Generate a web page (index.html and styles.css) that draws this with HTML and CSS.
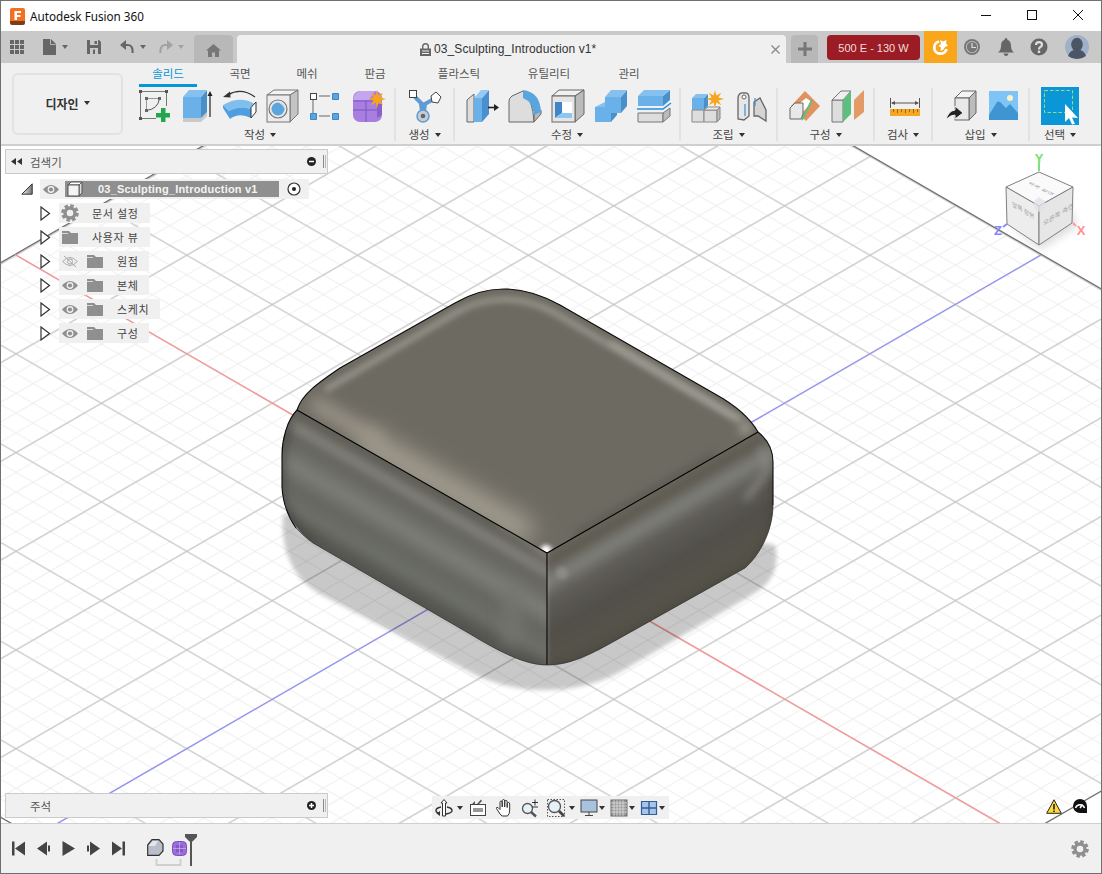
FILE: index.html
```html
<!DOCTYPE html>
<html lang="ko">
<head>
<meta charset="utf-8">
<title>Autodesk Fusion 360</title>
<link rel="stylesheet" href="styles.css">
</head>
<body>
<svg class="defs" width="0" height="0" aria-hidden="true">
  <defs>
    <symbol id="star" viewBox="-9 -9 18 18"><polygon fill="#f7a51b" points="0,-9 1.4,-3.4 6.2,-6.2 3.4,-1.4 9,0 3.4,1.4 6.2,6.2 1.4,3.4 0,9 -1.4,3.4 -6.2,6.2 -3.4,1.4 -9,0 -3.4,-1.4 -6.2,-6.2 -1.4,-3.4"/></symbol>
    <symbol id="eye" viewBox="0 0 16 12"><path fill="#8f8f8f" d="M0 6Q8-3 16 6 8 15 0 6Z"/><circle cx="8" cy="6" r="3.4" fill="#f0f0f0"/><circle cx="8" cy="6" r="2.1" fill="#8f8f8f"/></symbol>
    <symbol id="eye-off" viewBox="0 0 16 12"><path fill="none" stroke="#aaa" d="M.7 6Q8-2 15.3 6 8 14 .7 6Z"/><circle cx="8" cy="6" r="2.6" fill="none" stroke="#aaa"/><path stroke="#aaa" d="M2 .5 14 11.5"/></symbol>
    <symbol id="folder" viewBox="0 0 16 13"><path fill="#8f8f8f" d="M0 0H7L9 2H16V13H0Z"/><path stroke="#d8d8d8" d="M0 2.5H6"/></symbol>
    <symbol id="gear" viewBox="0 0 18 18"><circle cx="9" cy="9" r="7" fill="none" stroke="#8f8f8f" stroke-width="3.6" stroke-dasharray="3.3 2.2"/><circle cx="9" cy="9" r="5" fill="none" stroke="#8f8f8f" stroke-width="3.4"/></symbol>
    <symbol id="tri" viewBox="0 0 11 15"><path fill="#fff" stroke="#333" stroke-width="1.2" d="M1 1 9.5 7.5 1 14Z"/></symbol>
    <linearGradient id="rootTri" x1="0" x2="1" y1="0" y2="0"><stop offset="0" stop-color="#eee"/><stop offset="1" stop-color="#777"/></linearGradient>
  </defs>
</svg>

<div class="window">
  <header class="titlebar">
    <svg class="logo" viewBox="0 0 15 17"><path fill="#f37021" d="M2 0H13Q15 0 15 2V13H0V2Q0 0 2 0Z"/><path fill="#7c3d1b" d="M0 13H15V15Q15 17 13 17H2Q0 17 0 15Z"/><path fill="#fff" d="M4.5 3H11V5H7V7H10.5V9H7V12H4.5Z"/></svg>
    <span class="app-name">Autodesk Fusion 360</span>
    <div class="win-controls">
      <svg viewBox="0 0 12 12"><path stroke="#111" d="M1 6.5H11"/></svg>
      <svg viewBox="0 0 12 12"><rect x="1.5" y="1.5" width="9" height="9" fill="none" stroke="#111"/></svg>
      <svg viewBox="0 0 12 12"><path stroke="#111" d="M1 1 11 11M11 1 1 11"/></svg>
    </div>
  </header>

  <div class="tabbar">
    <div class="quick">
      <svg class="q-grid" viewBox="0 0 14 14"><path fill="#666" d="M0 0H4V4H0ZM5 0H9V4H5ZM10 0H14V4H10ZM0 5H4V9H0ZM5 5H9V9H5ZM10 5H14V9H10ZM0 10H4V14H0ZM5 10H9V14H5ZM10 10H14V14H10Z"/></svg>
      <svg class="q-file" viewBox="0 0 13 16"><path fill="#666" d="M0 0H8L13 5V16H0Z"/><path fill="#ccc" d="M8 0V5H13L12.2 5.8H7.2V0Z"/></svg>
      <i class="caret q-c1"></i>
      <svg class="q-save" viewBox="0 0 14 14"><path fill="#666" d="M0 0H12L14 2V14H0Z"/><path fill="#c9c9c9" d="M3 0H11V5H3ZM3 8H11V14H3Z"/><path fill="#666" d="M7.5 1H10V4H7.5ZM6 9.5H8V14H6Z"/></svg>
      <svg class="q-undo" viewBox="0 0 14 14"><path fill="none" stroke="#666" stroke-width="2.2" d="M3 5H8Q13 5 12.6 13"/><path fill="#666" d="M6 0V10L0 5Z"/></svg>
      <i class="caret q-c2"></i>
      <svg class="q-redo" viewBox="0 0 14 14"><path fill="none" stroke="#a2a2a2" stroke-width="2.2" d="M11 5H6Q1 5 1.400 13"/><path fill="#a2a2a2" d="M8 0V10L14 5Z"/></svg>
      <i class="caret caret-light q-c3"></i>
    </div>
    <div class="home-tab"><svg viewBox="0 0 15 13"><path fill="#777" d="M7.500 0 15 6.500H13V13H9V8.500H6V13H2V6.500H0Z"/></svg></div>
    <div class="doc-tab">
      <svg class="lock" viewBox="0 0 11 13"><path fill="none" stroke="#666" stroke-width="1.400" d="M2.700 6V3.600Q2.700 .8 5.500 .8 8.300 .8 8.300 3.600V6"/><path fill="#666" d="M0 5.500H11V13H0Z"/><path stroke="#f0f0f0" d="M2 8H9M2 10.500H9"/></svg>
      <span class="doc-name">03_Sculpting_Introduction v1*</span>
      <svg class="doc-close" viewBox="0 0 9 9"><path stroke="#888" stroke-width="1.300" d="M.5.5 8.500 8.500M8.500.5 .5 8.500"/></svg>
    </div>
    <div class="plus-tab"><svg viewBox="0 0 14 14"><path fill="#777" d="M5.500 0H8.500V5.500H14V8.500H8.500V14H5.500V8.500H0V5.500H5.500Z"/></svg></div>
    <div class="license">500 E - 130 W</div>
    <div class="job"><svg viewBox="0 0 18 18"><path fill="none" stroke="#fff" stroke-width="2.800" d="M7 3.500A6.200 6.200 0 1 0 14.500 11"/><path fill="#fff" d="M8 2 11 3.500 14.500 2 14 5.500 16 7.500 13 9 11 12 8.500 13 9 9.500 6.500 8 9 6Z"/></svg></div>
    <svg class="top-ico clock" viewBox="0 0 18 18"><circle cx="9" cy="9" r="8" fill="#777"/><circle cx="9" cy="9" r="6" fill="#c9c9c9"/><circle cx="9" cy="9" r="5.200" fill="#777"/><path fill="none" stroke="#ddd" stroke-width="1.200" d="M9 5V9.500H13"/></svg>
    <svg class="top-ico bell" viewBox="0 0 16 18"><path fill="#666" d="M8 0Q9.500 0 9.500 2 13 3 13 8 13 12 16 14.500H0Q3 12 3 8 3 3 6.500 2 6.500 0 8 0Z"/><path fill="#666" d="M5.500 15.500H10.500Q10 18 8 18 6 18 5.500 15.500Z"/></svg>
    <svg class="top-ico help" viewBox="0 0 18 18"><circle cx="9" cy="9" r="8.500" fill="#666"/><path fill="none" stroke="#ddd" stroke-width="2.200" d="M6 7Q6 4.200 9 4.200 12 4.200 12 6.800 12 8.500 10 9.300 9 9.800 9 11.500"/><rect x="7.800" y="12.600" width="2.400" height="2.400" fill="#ddd"/></svg>
    <svg class="avatar" viewBox="0 0 24 24"><circle cx="12" cy="12" r="12" fill="#9fb0c8"/><ellipse cx="12" cy="9.500" rx="5.800" ry="6.800" fill="#4b5566"/><path fill="#4b5566" d="M3 21Q5 15.500 9.500 15H14.500Q19 15.500 21 21 17 24 12 24 7 24 3 21Z"/></svg>
  </div>

  <section class="ribbon">
    <button class="design-btn">디자인<i class="caret caret-dark"></i></button>
    <div class="tools">
      <nav class="tabs">
        <span class="tab active">솔리드</span><span class="tab">곡면</span><span class="tab">메쉬</span><span class="tab">판금</span><span class="tab">플라스틱</span><span class="tab">유틸리티</span><span class="tab">관리</span>
      </nav>
      <div class="groups">
        <div class="group g1">
          <div class="icons">
            <svg viewBox="0 0 36 36"><path fill="none" stroke="#777" d="M4.500 3.500H30.500M4.500 3.500V30.500M4.500 30.500H20M30.500 3.500V18"/><path fill="#555" d="M3 2H6V5H3ZM29 2H32V5H29ZM3 29H6V32H3Z"/><path fill="none" stroke="#999" d="M10.500 10.500H23.500M10.500 10.500V22.500"/><path fill="none" stroke="#555" d="M10.500 22.500Q22 21 23.500 10.500"/><path fill="#666" d="M9 21H12V24H9ZM22 9H25V12H22ZM9 9H12V12H9Z"/><path fill="#22a84a" d="M25 20H29.500V25H34V29.500H29.500V34H25V29.500H20V25H25Z"/></svg>
            <svg viewBox="0 0 36 36"><polygon fill="#c9c9c9" points="4,30 22,30 28,24 28,28 22,34 4,34"/><polygon fill="#69b1e8" points="4,9 22,9 22,30 4,30"/><polygon fill="#4a90c8" points="22,9 28,2 28,24 22,30"/><polygon fill="#85c0ee" points="4,9 10,2 28,2 22,9"/><path stroke="#222" stroke-width="1.200" d="M31 6V29"/><path fill="#222" d="M28.500 8 31 3 33.500 8Z"/></svg>
            <svg viewBox="0 0 36 36"><path fill="none" stroke="#333" stroke-width="1.200" d="M6 7Q19-1 33 9"/><path fill="#333" d="M1 9 8 3.500 8.500 9.500Z"/><path fill="#7fbfee" d="M1 17Q18 7 33 16L29 21Q17 17 7 23Z"/><path fill="#4f9ee0" d="M1 17 7 23Q17 17 29 21V30Q17 24 8 31L1 20Z"/><polygon fill="#fff" stroke="#333" points="29,19.500 34,14 34,24 29,30"/></svg>
            <svg viewBox="0 0 36 36"><polygon fill="#f3f3f3" stroke="#777" points="2,7 9,2 33,2 25,7"/><polygon fill="#c4c4c4" stroke="#777" points="25,7 33,2 33,26 25,34"/><rect x="2" y="7" width="23" height="27" fill="#ececec" stroke="#777"/><circle cx="13" cy="21" r="9" fill="#e8e8e8" stroke="#777" stroke-width="1.200"/><circle cx="13" cy="21" r="6.500" fill="#5aa5de"/><path fill="#e8f3fb" d="M13 14.500A6.500 6.500 0 0 1 19.500 21Q18 16 13 14.500Z"/></svg>
            <svg viewBox="0 0 36 36"><path stroke="#666" d="M11 8H22M5 11V25M11 28H22"/><rect x="2.500" y="5.500" width="6" height="6" fill="#fff" stroke="#444"/><path fill="#5aa5de" stroke="#3f86c8" d="M24.500 5.500H30.500V11.500H24.500ZM2.500 25.500H8.500V31.500H2.500ZM24.500 25.500H30.500V31.500H24.500Z"/></svg>
            <svg viewBox="0 0 36 36"><rect x="2" y="3" width="29" height="31" rx="7" fill="#a87fe0"/><path fill="#c4a6ee" d="M2 12Q3 5 9 3H24L18 12Z"/><path fill="none" stroke="#7c54bc" d="M2 22H31M15 13V34M2 13H22"/><path fill="#8a60c8" d="M26 16H31V27L26 30Z"/><use href="#star" x="17" y="2" width="18" height="18"/></svg>
          </div>
          <div class="group-label lbl1">작성<i class="caret caret-dark"></i></div>
        </div>
        <div class="group g2">
          <div class="icons">
            <svg viewBox="0 0 36 36"><path fill="none" stroke="#5f9bd5" stroke-width="4" d="M9 9 17 17M28 11 17 17M17 17V25"/><path fill="#5f9bd5" d="M13 16H21L20 24H14Z"/><circle cx="17" cy="28" r="6" fill="#c6ccd3" stroke="#5f9bd5" stroke-width="1.500"/><circle cx="17" cy="28" r="2.300" fill="#666"/><rect x="3.500" y="2.500" width="7" height="7" fill="#fff" stroke="#444"/><polygon fill="#fff" stroke="#444" points="30,4 35,9 32,15 26,14 25,8"/></svg>
          </div>
          <div class="group-label">생성<i class="caret caret-dark"></i></div>
        </div>
        <div class="group g3">
          <div class="icons">
            <svg viewBox="0 0 36 36"><polygon fill="#ddd" stroke="#666" points="3,12 10,6 10,34 3,34"/><polygon fill="#69b1e8" points="10,10 18,10 18,34 10,34"/><polygon fill="#4a8fd0" points="18,10 25,2 25,26 18,34"/><polygon fill="#95c9f3" points="10,10 17,2 25,2 18,10"/><path stroke="#222" stroke-width="1.600" d="M24 19.500H31"/><path fill="#222" d="M30 16 35 19.500 30 23Z"/></svg>
            <svg viewBox="0 0 36 36"><path fill="#ddd" stroke="#666" d="M2 34V13Q2 10 5 8L16 3Q26 12 27 34Z"/><polygon fill="#b8b8b8" stroke="#666" points="27,34 34,26 34,22 27,26"/><path fill="#5aa5de" d="M16 2Q33 4 34 24L27 27Q26 14 16 10Z"/></svg>
            <svg viewBox="0 0 36 36"><polygon fill="#f0f0f0" stroke="#666" points="2,8 9,2 34,2 25,8"/><polygon fill="#bbb" stroke="#666" points="25,8 34,2 34,26 25,34"/><rect x="2" y="8" width="23" height="26" fill="#e5e5e5" stroke="#666"/><rect x="5" y="14" width="17" height="16" fill="#fff"/><polygon fill="#3f86c8" points="5,14 12,14 12,25 5,30"/><polygon fill="#8cc6f2" points="5,30 12,25 22,25 22,30"/></svg>
            <svg viewBox="0 0 36 36"><polygon fill="#69b1e8" points="12,9 28,9 28,25 12,25"/><polygon fill="#4a90c8" points="28,9 34,2 34,18 28,25"/><polygon fill="#85c0ee" points="12,9 18,2 34,2 28,9"/><polygon fill="#69b1e8" points="2,19 18,19 18,34 2,34"/><polygon fill="#4a90c8" points="18,25 24,25 24,27 18,34"/><polygon fill="#85c0ee" points="2,19 12,14 12,19"/></svg>
            <svg viewBox="0 0 36 36"><polygon fill="#69b1e8" points="2,8 27,8 27,18 2,18"/><polygon fill="#4a90c8" points="27,8 34,2 34,12 27,18"/><polygon fill="#85c0ee" points="2,8 8,2 34,2 27,8"/><path fill="none" stroke="#1e90e0" stroke-width="1.500" d="M1 21H27L35 15"/><polygon fill="#ddd" stroke="#777" points="2,25 27,25 27,34 2,34"/><polygon fill="#bbb" stroke="#777" points="27,25 34,20 34,28 27,34"/></svg>
          </div>
          <div class="group-label">수정<i class="caret caret-dark"></i></div>
        </div>
        <div class="group g4">
          <div class="icons">
            <svg viewBox="0 0 36 36"><polygon fill="#69b1e8" points="3,10 15,10 15,22 3,22"/><polygon fill="#4a90c8" points="15,10 19,6 19,18 15,22"/><polygon fill="#85c0ee" points="3,10 7,6 19,6 15,10"/><polygon fill="#ddd" stroke="#888" points="3,22 15,22 15,34 3,34"/><polygon fill="#ddd" stroke="#888" points="15,22 28,22 28,34 15,34"/><polygon fill="#bbb" stroke="#888" points="28,22 31,19 31,31 28,34"/><polygon fill="#eee" stroke="#888" points="15,22 19,19 31,19 28,22"/><use href="#star" x="17" y="2" width="18" height="18"/></svg>
            <svg viewBox="0 0 36 36"><path fill="#e6e6e6" stroke="#666" stroke-width="1.300" d="M2 31V11Q2 4 8 5 13 4 13 10V28L8 32Z"/><path fill="#d4d4d4" stroke="#666" stroke-width="1.300" d="M18 14 24 10 30 22V33L22 28 18 28Z"/><path stroke="#3b8ed8" stroke-width="1.200" d="M9 16V28M19 10V18"/><circle cx="8" cy="9" r="2" fill="#fff" stroke="#666"/></svg>
          </div>
          <div class="group-label">조립<i class="caret caret-dark"></i></div>
        </div>
        <div class="group g5">
          <div class="icons">
            <svg viewBox="0 0 36 36"><polygon fill="#e0935f" points="17,3 32,18 18,33 3,18"/><polygon fill="#fff" points="12,15 18,10 24,14 13,26"/><polygon fill="#e8e8e8" stroke="#666" points="2,20 7,15 15,15 15,26 13,31 2,31"/><path stroke="#5dbf7f" stroke-width="2" d="M24 12 14 32"/></svg>
            <svg viewBox="0 0 36 36"><polygon fill="#ddd" stroke="#777" points="2,12 13,12 13,34 2,34"/><polygon fill="#efefef" stroke="#777" points="2,12 11,3 21,3 13,12"/><polygon fill="#5dbf7f" points="13,12 21,3 21,26 13,34"/><polygon fill="#e29a66" points="24,12 34,2 34,24 24,32"/></svg>
          </div>
          <div class="group-label">구성<i class="caret caret-dark"></i></div>
        </div>
        <div class="group g6">
          <div class="icons">
            <svg viewBox="0 0 36 36"><path stroke="#555" d="M4.500 10V20M33.500 10V20M6 15H32"/><path fill="#555" d="M5 15 9 13V17ZM33 15 29 13V17Z"/><rect x="4" y="21" width="30" height="7" fill="#f6a623"/><path stroke="#9b6a14" d="M7.500 21V24M11.500 21V25M15.500 21V24M19.500 21V25M23.500 21V24M27.500 21V25M31.500 21V24"/></svg>
          </div>
          <div class="group-label">검사<i class="caret caret-dark"></i></div>
        </div>
        <div class="group g7">
          <div class="icons">
            <svg viewBox="0 0 36 36"><polygon fill="#f4f4f4" stroke="#666" points="10,10 17,3 31,3 24,10"/><polygon fill="#bcbcbc" stroke="#666" points="24,10 31,3 31,25 24,32"/><rect x="10" y="10" width="14" height="22" fill="#e8e8e8" stroke="#666"/><path fill="#222" stroke="#f0f0f0" d="M1 32Q3 23 10 22V18L18 25 10 31V27Q5 27 1 32Z"/></svg>
            <svg viewBox="0 0 36 36"><rect x="4" y="3" width="29" height="29" fill="#7fc4f6"/><path fill="#3f95d2" d="M4 27 12 14Q15 12 18 17L21 20 25 16 33 25V32H4Z"/><circle cx="25" cy="10" r="3" fill="#fbf3c4"/></svg>
          </div>
          <div class="group-label">삽입<i class="caret caret-dark"></i></div>
        </div>
        <div class="group g8">
          <div class="icons">
            <svg class="select-ico" viewBox="0 0 38 38"><rect width="38" height="38" fill="#0b96d8"/><rect x="3.500" y="3.500" width="28" height="22" fill="none" stroke="#8fe07f" stroke-dasharray="3.500 2"/><path fill="#fff" d="M24 17 37 31 31 30.500 34 37 31 37.500 28 31 24 35Z"/></svg>
          </div>
          <div class="group-label">선택<i class="caret caret-dark"></i></div>
        </div>
      </div>
    </div>
  </section>

  <main class="canvas">
    <svg class="scene" viewBox="1 146 1100 677" preserveAspectRatio="none">
      <defs>
        <pattern id="grid" width="100" height="100" patternUnits="userSpaceOnUse" patternTransform="matrix(.854 -.4935 .854 .4935 528.4 551.3)">
          <path fill="none" stroke="#eeeeee" stroke-width="1.100" d="M20 0V100M40 0V100M60 0V100M80 0V100M0 20H100M0 40H100M0 60H100M0 80H100"/>
          <path fill="none" stroke="#c6c6c6" stroke-width="1.400" d="M0 0V100M100 0V100M0 0H100M0 100H100"/>
        </pattern>
        <filter id="b2" filterUnits="userSpaceOnUse" x="0" y="100" width="1102" height="774"><feGaussianBlur stdDeviation="2"/></filter>
        <filter id="b3" filterUnits="userSpaceOnUse" x="0" y="100" width="1102" height="774"><feGaussianBlur stdDeviation="3"/></filter>
        <filter id="b4" filterUnits="userSpaceOnUse" x="0" y="100" width="1102" height="774"><feGaussianBlur stdDeviation="4"/></filter>
        <filter id="b8" filterUnits="userSpaceOnUse" x="0" y="100" width="1102" height="774"><feGaussianBlur stdDeviation="8"/></filter>
        <filter id="b12" filterUnits="userSpaceOnUse" x="0" y="100" width="1102" height="774"><feGaussianBlur stdDeviation="12"/></filter>
        <clipPath id="cT"><path d="M297 410C302 394 318 383 340 368L455 303C485 285 520 283 560 305L715 394C735 405 750 418 758 432L547 553Z"/></clipPath>
        <clipPath id="cL"><path d="M297 410C287 420 282 440 282 455V487C283 510 295 530 313 543L470 634C500 652 525 665 547 665V553Z"/></clipPath>
        <clipPath id="cR"><path d="M758 432C768 440 773 450 773 462V505C773 530 760 555 745 568L620 638C590 655 570 665 547 665V553Z"/></clipPath>
        <linearGradient id="gL" gradientUnits="userSpaceOnUse" x1="422" y1="482" x2="372" y2="569">
          <stop offset="0" stop-color="#5e5d55"/><stop offset=".07" stop-color="#66645e"/><stop offset=".15" stop-color="#83827a"/><stop offset=".25" stop-color="#656460"/><stop offset=".36" stop-color="#6d6d67"/><stop offset=".5" stop-color="#7d7d77"/><stop offset=".68" stop-color="#666661"/><stop offset=".86" stop-color="#6d6e69"/><stop offset="1" stop-color="#585853"/>
        </linearGradient>
        <linearGradient id="gR" gradientUnits="userSpaceOnUse" x1="650" y1="493" x2="700" y2="580">
          <stop offset="0" stop-color="#6a665c"/><stop offset=".1" stop-color="#5c5950"/><stop offset=".26" stop-color="#7f807a"/><stop offset=".42" stop-color="#5f5d57"/><stop offset=".7" stop-color="#514f49"/><stop offset="1" stop-color="#555349"/>
        </linearGradient>
      </defs>

      <polygon fill="#fff" points="0,0 1102,0 1102,874 0,874"/>
      <polygon fill="url(#grid)" points="528,-42 -479,540 528,1122 1536,540"/>
      <polygon fill="none" stroke="#707070" stroke-width="1.300" points="528,-42 -479,540 528,1122 1536,540"/>
      <path fill="none" stroke="#8f8fff" stroke-width="1.200" d="M1040.800 255 34 837"/>
      <path fill="none" stroke="#ff8f8f" stroke-width="1.200" d="M15 254.500 1022 836"/>

      <path fill="#000" opacity=".21" filter="url(#b2)" d="M283 515C281 550 292 578 320 594L470 672C515 696 575 696 620 672L750 596C772 584 780 568 775 545L640 520 400 500Z"/>

      <g clip-path="url(#cT)">
        <rect x="280" y="280" width="490" height="280" fill="#6d6a62"/>
        <path fill="none" stroke="#b0aa9b" stroke-width="22" filter="url(#b12)" d="M360 438 530 535"/>
        <path fill="none" stroke="#a09a8c" stroke-width="14" filter="url(#b8)" d="M312 402 380 442"/>
        <path fill="none" stroke="#9d9c93" stroke-width="5" filter="url(#b3)" d="M325 390 457 312C485 296 520 294 555 313L738 420"/>
        <path fill="none" stroke="#a6a59c" stroke-width="4" filter="url(#b3)" d="M610 342 742 420"/>
        <path fill="none" stroke="#5c5951" stroke-width="7" filter="url(#b4)" d="M575 536 715 455"/>
        <circle cx="745" cy="428" r="7" fill="#96948a" filter="url(#b4)"/>
        <circle cx="546" cy="551" r="6" fill="#fff" filter="url(#b2)"/>
      </g>
      <g clip-path="url(#cL)">
        <rect x="275" y="400" width="280" height="270" fill="url(#gL)" filter="url(#b3)"/>
        <path fill="none" stroke="#3f3e3a" stroke-width="9" opacity=".6" filter="url(#b4)" d="M290 415C283 440 280 460 280 487 281 510 295 530 313 545"/>
        <path fill="none" stroke="#45443f" stroke-width="6" opacity=".4" filter="url(#b4)" d="M313 545 470 636C500 654 525 667 547 667"/>
        <path fill="none" stroke="#8a8880" stroke-width="7" filter="url(#b4)" d="M500 522C530 539 540 547 548 558"/>
        <path fill="none" stroke="#74756f" stroke-width="16" filter="url(#b8)" d="M512 585V645"/>
      </g>
      <g clip-path="url(#cR)">
        <rect x="545" y="425" width="235" height="245" fill="url(#gR)" filter="url(#b3)"/>
        <path fill="none" stroke="#3f3e39" stroke-width="8" opacity=".5" filter="url(#b4)" d="M775 470V505C775 530 760 560 745 570L620 640C590 657 570 667 547 667"/>
        <circle cx="562" cy="573" r="6" fill="#8d8b84" filter="url(#b2)"/>
        <path fill="none" stroke="#8d8c85" stroke-width="5" filter="url(#b4)" d="M760 448 768 470 745 500"/>
      </g>
      <path fill="none" stroke="#0b0b0b" stroke-width="1.100" d="M297 410C302 394 318 383 340 368L455 303C485 285 520 283 560 305L715 394C735 405 750 418 758 432C768 440 773 450 773 462V505M297 410C287 420 282 440 282 455V487C283 505 289 518 296 528"/>
      <path fill="none" stroke="#000" stroke-width="1.100" d="M297 410 547 553 758 432M547 553V665"/>
      <path fill="none" stroke="#2a2a2a" stroke-width=".7" d="M296 528C302 534 307 539 313 543L470 634C500 652 525 665 547 665 570 665 590 655 620 638L745 568C760 555 773 530 773 505"/>

      <polygon fill="#000" opacity=".13" filter="url(#b4)" points="1012,226 1040,250 1078,226 1060,190"/>
      <polygon fill="#fafafa" stroke="#7f7f7f" points="1039,172 1073,187 1039,206 1006,187"/>
      <polygon fill="#ededed" stroke="#7f7f7f" points="1006,187 1039,206 1039,245 1007,224"/>
      <polygon fill="#e6e6e6" stroke="#7f7f7f" points="1073,187 1072,223 1039,245 1039,206"/>
      <polygon fill="#dfe2e8" opacity=".8" points="1039,197 1045,201 1045,208 1039,212 1034,208 1034,201"/>
      <g class="cube-text">
        <text transform="matrix(.9 .45 -.5 .3 1027 183)">위쪽 평면</text>
        <text transform="matrix(.8 .48 0 .9 1012 206)">앞쪽 정면</text>
        <text transform="matrix(.9 -.55 0 .9 1043 226)">오른쪽 측면</text>
      </g>
      <path stroke="#7fe07f" stroke-width="2" d="M1039 171V163"/>
      <path stroke="#ff9a9a" stroke-width="2" d="M1073 223 1076 226"/>
      <path stroke="#8a8aff" stroke-width="2" d="M1007 224 1003 227"/>
      <text class="axis" x="1039" y="163" fill="#70e070">Y</text>
      <text class="axis" x="1081" y="235" fill="#ff9090">X</text>
      <text class="axis" x="998" y="235" fill="#8585ff">Z</text>
    </svg>

    <aside class="browser">
      <div class="panel">
        <svg class="panel-back" viewBox="0 0 11 7"><path fill="#333" d="M5 0V7L0 3.500ZM11 0V7L6 3.500Z"/></svg>
        <span class="panel-title">검색기</span>
        <svg class="panel-btn" viewBox="0 0 9 9"><circle cx="4.500" cy="4.500" r="4.500" fill="#222"/><path stroke="#fff" stroke-width="1.500" d="M2 4.500H7"/></svg>
        <i class="grip"></i>
      </div>
      <ul class="tree">
        <li class="root">
          <svg class="root-tri" viewBox="0 0 12 12"><path fill="url(#rootTri)" stroke="#333" d="M.8 11.200 11.200.8V11.200Z"/></svg>
          <div class="root-box">
            <svg class="t-ico"><use href="#eye"/></svg>
            <div class="root-bar">
              <svg class="root-cube" viewBox="0 0 16 16"><polygon fill="#fff" stroke="#555" points="1,4 4,1 15,1 12,4"/><polygon fill="#ddd" stroke="#555" points="12,4 15,1 15,12 12,15"/><rect x="1" y="4" width="11" height="11" fill="#f4f4f4" stroke="#555"/></svg>
              <span class="root-name">03_Sculpting_Introduction v1</span>
            </div>
            <svg class="radio" viewBox="0 0 14 14"><circle cx="7" cy="7" r="6" fill="#fff" stroke="#333" stroke-width="1.200"/><circle cx="7" cy="7" r="2" fill="#222"/></svg>
          </div>
        </li>
        <li class="node">
          <svg class="node-tri"><use href="#tri"/></svg>
          <div class="node-box"><svg class="gear-ico"><use href="#gear"/></svg><span class="node-name wide">문서 설정</span></div>
        </li>
        <li class="node">
          <svg class="node-tri"><use href="#tri"/></svg>
          <div class="node-box"><svg class="t-ico"><use href="#folder"/></svg><span class="node-name wide">사용자 뷰</span></div>
        </li>
        <li class="node">
          <svg class="node-tri"><use href="#tri"/></svg>
          <div class="node-box"><svg class="t-ico"><use href="#eye-off"/></svg><svg class="t-ico f"><use href="#folder"/></svg><span class="node-name">원점</span></div>
        </li>
        <li class="node">
          <svg class="node-tri"><use href="#tri"/></svg>
          <div class="node-box"><svg class="t-ico"><use href="#eye"/></svg><svg class="t-ico f"><use href="#folder"/></svg><span class="node-name">본체</span></div>
        </li>
        <li class="node">
          <svg class="node-tri"><use href="#tri"/></svg>
          <div class="node-box"><svg class="t-ico"><use href="#eye"/></svg><svg class="t-ico f"><use href="#folder"/></svg><span class="node-name">스케치</span></div>
        </li>
        <li class="node">
          <svg class="node-tri"><use href="#tri"/></svg>
          <div class="node-box"><svg class="t-ico"><use href="#eye"/></svg><svg class="t-ico f"><use href="#folder"/></svg><span class="node-name">구성</span></div>
        </li>
      </ul>
    </aside>

    <div class="panel notes">
      <span class="panel-title notes-title">주석</span>
      <svg class="panel-btn" viewBox="0 0 9 9"><circle cx="4.500" cy="4.500" r="4.500" fill="#222"/><path stroke="#fff" stroke-width="1.500" d="M2 4.500H7M4.500 2V7"/></svg>
      <i class="grip"></i>
    </div>

    <div class="navbar">
      <div class="nav-btn"><svg viewBox="0 0 18 18"><path fill="#fff" stroke="#333" d="M9 .5 12 4H10.500V17H7.500V4H6Z"/><path fill="none" stroke="#333" stroke-width="1.400" d="M6 8Q1 9 1 11.500 1 14 5 14.500M12 8Q17 9 17 11.500 17 14 11 15"/><path fill="#333" d="M5 12 1.500 14.500 5 17Z"/></svg><i class="caret caret-dark"></i></div>
      <div class="nav-btn"><svg viewBox="0 0 18 18"><rect x="1.500" y="5.500" width="15" height="11" fill="#fff" stroke="#444"/><rect x="4" y="9" width="10" height="4" fill="#999"/><path fill="#555" d="M3 5 6 2V5ZM8 5 12 .5 13 2 10 5Z"/></svg></div>
      <div class="nav-btn"><svg viewBox="0 0 18 18"><path fill="#fff" stroke="#333" d="M5 15 1.500 9.500Q1 8 3 8.500L5 10.500V3.500Q5 2 6 2 7 2 7.200 3.500V8 1.800Q7.500.5 8.500.5 9.700.5 9.700 2V8 2.500Q10 1.500 11 1.500 12.200 1.500 12.200 3V8.500 4.500Q12.500 3.500 13.500 3.500 14.700 3.500 14.700 5V11Q14.700 15 12.500 17H7Z"/></svg></div>
      <div class="nav-btn"><svg viewBox="0 0 18 18"><circle cx="6.500" cy="9.500" r="5" fill="#e6f1f7" stroke="#555" stroke-width="1.300"/><path stroke="#555" stroke-width="2.400" d="M10 13 15 17.500"/><path stroke="#333" d="M11 3.500H17M14 .5V6.500M11 8H17"/></svg></div>
      <div class="nav-btn"><svg viewBox="0 0 18 18"><rect x=".5" y=".5" width="17" height="17" fill="none" stroke="#555" stroke-dasharray="1.500 1.500"/><circle cx="7.500" cy="7.500" r="6" fill="#e6f1f7" stroke="#555" stroke-width="1.300"/><path stroke="#444" stroke-width="2.600" d="M12 12 17 17"/></svg><i class="caret caret-dark"></i></div>
      <div class="nav-btn n1"><svg viewBox="0 0 18 18"><rect x="1" y="1" width="16" height="12" fill="#a9c2de" stroke="#444"/><path stroke="#444" d="M9 13V16M5 16.500H13"/></svg><i class="caret caret-dark"></i></div>
      <div class="nav-btn n0"><svg viewBox="0 0 18 18"><rect x="1" y="1" width="16" height="16" fill="#9a9a9a" stroke="#666"/><path stroke="#e4e4e4" stroke-width=".7" d="M4 1V17M7 1V17M10 1V17M13 1V17M1 4H17M1 7H17M1 10H17M1 13H17"/></svg><i class="caret caret-dark"></i></div>
      <div class="nav-btn n0"><svg viewBox="0 0 18 18"><path fill="#a8c4e8" stroke="#2f5f99" stroke-width="1.200" d="M1.500 2.500H16.500V15.500H1.500Z"/><path stroke="#2f5f99" stroke-width="1.400" d="M9 2.500V15.500M1.500 9H16.500"/></svg><i class="caret caret-dark"></i></div>
    </div>

    <div class="status-icons">
      <svg viewBox="0 0 16 15"><path fill="#ffd83b" stroke="#222" d="M8 .8 15.300 14.300H.7Z"/><path stroke="#222" stroke-width="1.600" d="M8 5V10.500M8 11.500V13"/></svg>
      <svg viewBox="0 0 16 15"><path fill="#111" d="M8 0A7 7 0 0 1 15 7V14H8A7 7 0 0 1 8 0Z"/><path fill="none" stroke="#fff" stroke-width="1.500" d="M3.500 9A4.800 4.800 0 0 1 12.500 9"/><path stroke="#fff" stroke-width="1.500" d="M8 9 10.500 5.500"/></svg>
    </div>
  </main>

  <footer class="timeline">
    <div class="controls">
      <svg viewBox="0 0 13 15"><path fill="#444" d="M0 .5H2.500V14.500H0ZM13 .5V14.500L3 7.500Z"/></svg>
      <svg viewBox="0 0 13 15"><path fill="#444" d="M10 .5V14.500L0 7.500ZM11 4.500H13V10.500H11Z"/></svg>
      <svg viewBox="0 0 13 15"><path fill="#444" d="M.5 0 13 7.500.5 15Z"/></svg>
      <svg viewBox="0 0 13 15"><path fill="#444" d="M3 .5V14.500L13 7.500ZM0 4.500H2V10.500H0Z"/></svg>
      <svg viewBox="0 0 13 15"><path fill="#444" d="M13 .5H10.500V14.500H13ZM0 .5V14.500L10 7.500Z"/></svg>
    </div>
    <svg class="track" viewBox="0 0 56 40">
      <path fill="#b9bfca" stroke="#333" stroke-width="1.200" d="M.7 16 5 10.700H12L16 15V22L12 26.300H.7Z"/>
      <path fill="#e4e6ea" d="M2 16 6 12H11L8 17H2Z"/>
      <rect x="25.500" y="12.500" width="14" height="14" rx="4" fill="#9a70d8" stroke="#7b4fc0"/>
      <path fill="#7b4fc0" d="M29 16H36V23H29Z" opacity=".7"/>
      <path stroke="#c8a8f0" stroke-width=".8" d="M32.500 13V26M26 19.500H39"/>
      <path fill="none" stroke="#cfcfcf" stroke-width="2" d="M9.500 30V36H33.500V30"/>
      <path fill="#555" d="M38 5H50V8L45.500 12.500H42.500L38 8Z"/>
      <rect x="43" y="10" width="2" height="27" fill="#555"/>
    </svg>
    <svg class="settings"><use href="#gear"/></svg>
  </footer>
</div>
</body>
</html>
```

FILE: styles.css
```css
* { box-sizing: border-box; }

html, body {
  margin: 0;
  padding: 0;
  background: #fff;
  overflow: hidden;
}

body {
  font-family: "Liberation Sans", "Noto Sans CJK KR", sans-serif;
  color: #444;
}

.defs { position: absolute; }

.window {
  width: 1102px;
  height: 874px;
  display: flex;
  flex-direction: column;
  border: 1px solid #707070;
  background: #fff;
}

/* title bar */
.titlebar {
  height: 30px;
  display: flex;
  align-items: center;
  padding-left: 9px;
  background: #fff;
  flex: none;
}
.logo { width: 15px; height: 17px; }
.app-name {
  font-family: "Noto Sans", sans-serif;
  font-size: 11.7px;
  color: #111;
  margin-left: 5px;
}
.win-controls {
  margin-left: auto;
  margin-right: 17px;
  display: flex;
  gap: 34px;
  margin-top: -2px;
}
.win-controls svg { width: 12px; height: 12px; display: block; }

/* carets */
.caret {
  display: inline-block;
  width: 0;
  height: 0;
  border-left: 3.5px solid transparent;
  border-right: 3.5px solid transparent;
  border-top: 4px solid #666;
  flex: none;
}
.caret-dark { border-top-color: #333; margin-left: 5px; }
.caret-light { border-top-color: #a2a2a2; }

/* tab bar */
.tabbar {
  height: 32px;
  background: #c9c9c9;
  display: flex;
  align-items: flex-end;
  flex: none;
  position: relative;
}
.quick {
  width: 193px;
  align-self: stretch;
  display: flex;
  align-items: center;
  flex: none;
}
.q-grid { width: 14px; height: 14px; margin-left: 9px; }
.q-file { width: 13px; height: 16px; margin-left: 19px; }
.q-c1 { margin-left: 6px; }
.q-save { width: 14px; height: 14px; margin-left: 19px; }
.q-undo { width: 14px; height: 14px; margin-left: 19px; }
.q-c2 { margin-left: 6px; }
.q-redo { width: 14px; height: 14px; margin-left: 13px; }
.q-c3 { margin-left: 5px; }

.home-tab {
  width: 39px;
  height: 28px;
  background: #b8b8b8;
  border-radius: 4px 4px 0 0;
  display: flex;
  justify-content: center;
  padding-top: 9px;
  flex: none;
}
.home-tab svg { width: 15px; height: 13px; }

.doc-tab {
  width: 549px;
  height: 28px;
  margin-left: 4px;
  background: #f0f0f0;
  border-radius: 4px 4px 0 0;
  display: flex;
  align-items: center;
  padding-left: 183px;
  flex: none;
}
.lock { width: 11px; height: 13px; }
.doc-name { font-size: 12px; letter-spacing: .1px; color: #333; margin-left: 3px; }
.doc-close { width: 9px; height: 9px; margin-left: auto; margin-right: 6px; }

.plus-tab {
  width: 27px;
  height: 28px;
  margin-left: 5px;
  background: #b8b8b8;
  border-radius: 4px 4px 0 0;
  display: flex;
  align-items: center;
  justify-content: center;
  flex: none;
}
.plus-tab svg { width: 14px; height: 14px; }

.license {
  width: 93px;
  height: 25px;
  margin: 0 0 3px 9px;
  background: #9b1c24;
  border-radius: 4px;
  color: #f4dcdc;
  font-size: 11px;
  display: flex;
  align-items: center;
  justify-content: center;
  flex: none;
}
.job {
  width: 33px;
  align-self: stretch;
  margin-left: 4px;
  background: #f9a61a;
  display: flex;
  align-items: center;
  justify-content: center;
  flex: none;
}
.job svg { width: 18px; height: 18px; }

.top-ico { align-self: center; flex: none; }
.clock { width: 18px; height: 18px; margin-left: 6px; }
.bell { width: 16px; height: 18px; margin-left: 17px; }
.help { width: 18px; height: 18px; margin-left: 16px; }
.avatar { width: 24px; height: 24px; align-self: center; margin-left: 17px; flex: none; }

/* ribbon */
.ribbon {
  height: 83px;
  background: #f0f0f0;
  border-bottom: 2px solid #cfcfcf;
  display: flex;
  flex: none;
}
.design-btn {
  width: 111px;
  height: 62px;
  margin: 10px 0 0 11px;
  background: #f0f0f0;
  border: 2px solid #e2e2e2;
  border-radius: 6px;
  font: bold 12px "Liberation Sans", "Noto Sans CJK KR", sans-serif;
  color: #333;
  display: flex;
  align-items: center;
  justify-content: center;
  flex: none;
  padding: 0 0 2px;
}
.tools { margin-left: 8px; flex: 1; min-width: 0; }

.tabs {
  height: 24px;
  margin-left: 8px;
  display: flex;
}
.tab {
  font-size: 11.500px;
  color: #555;
  text-align: center;
  line-height: 22px;
  height: 24px;
  flex: none;
}
.tab:nth-child(1) { width: 58px; }
.tab:nth-child(2) { width: 86px; }
.tab:nth-child(3) { width: 48px; }
.tab:nth-child(4) { width: 88px; }
.tab:nth-child(5) { width: 80px; }
.tab:nth-child(6) { width: 100px; }
.tab:nth-child(7) { width: 60px; }
.tab.active {
  color: #0696d7;
  border-bottom: 3px solid #0696d7;
}

.groups { display: flex; height: 54px; }
.group {
  height: 53px;
  margin-top: 1px;
  border-right: 2px solid #e2e2e2;
  display: flex;
  flex-direction: column;
  flex: none;
}
.g8 { border-right: 0; }
.g1 { width: 265px; }
.g2 { width: 59px; }
.g3 { width: 226px; }
.g4 { width: 97px; }
.g5 { width: 97px; }
.g6 { width: 58px; }
.g7 { width: 97px; }
.g8 { width: 60px; }

.icons { height: 36px; display: flex; }
.icons svg { width: 36px; height: 36px; flex: none; overflow: visible; }
.g1 .icons { padding-left: 5px; gap: 7px; }
.g2 .icons { padding-left: 10px; }
.g3 .icons { padding-left: 9px; gap: 7px; }
.g4 .icons { padding-left: 8px; gap: 11px; }
.g5 .icons { padding-left: 10px; gap: 6px; }
.g6 .icons { padding-left: 11px; }
.g7 .icons { padding-left: 12px; gap: 4px; }
.g8 .icons { padding-left: 11px; }
.icons .select-ico { width: 38px; height: 38px; margin-top: -1px; }

.group-label {
  font-size: 11.500px;
  color: #444;
  line-height: 16px;
  margin-top: 3px;
  display: flex;
  align-items: center;
  justify-content: center;
}
.lbl1 { padding-right: 5px; }

/* canvas */
.canvas {
  flex: 1;
  position: relative;
  overflow: hidden;
  background: #fff;
}
.scene {
  position: absolute;
  left: 0;
  top: 0;
  width: 100%;
  height: 100%;
}
.cube-text { font-family: "Noto Sans CJK KR", sans-serif; font-size: 7px; fill: #9a9a9a; }
.axis {
  font-family: "Liberation Sans", sans-serif;
  font-size: 13px;
  font-weight: bold;
  text-anchor: middle;
}

.panel {
  width: 323px;
  height: 25px;
  background: #f0f0f0;
  border: 1px solid #cbcbcb;
  display: flex;
  align-items: center;
  padding-left: 5px;
  font-size: 12px;
}
.panel-back { width: 11px; height: 7px; }
.panel-title { margin-left: 8px; color: #555; font-size: 11.500px; }
.notes-title { margin-left: 19px; }
.panel-btn { width: 9px; height: 9px; margin-left: auto; margin-right: 7px; }
.grip {
  width: 3px;
  height: 13px;
  border-left: 1px solid #888;
  border-right: 1px solid #bbb;
  margin-right: 1px;
}

.browser {
  position: absolute;
  left: 4px;
  top: 3px;
}
.notes {
  position: absolute;
  left: 4px;
  bottom: 5px;
}

.tree { list-style: none; margin: 5px 0 0; padding: 0; }
.root { display: flex; align-items: center; height: 20px; padding-left: 16px; }
.root-tri { width: 12px; height: 12px; flex: none; }
.root-box {
  width: 269px;
  height: 20px;
  margin-left: 7px;
  background: #f0f0f0;
  display: flex;
  align-items: center;
  padding-left: 3px;
}
.root-bar {
  width: 214px;
  height: 16px;
  margin-left: 6px;
  background: #8f8f8f;
  display: flex;
  align-items: center;
}
.root-cube { width: 16px; height: 16px; margin-left: 2px; flex: none; }
.root-name {
  font-size: 11px;
  font-weight: bold;
  color: #f4f4f4;
  margin-left: 15px;
  letter-spacing: .2px;
  white-space: nowrap;
}
.radio { width: 14px; height: 14px; margin-left: 8px; }

.t-ico { width: 16px; height: 13px; flex: none; display: block; }
.t-ico.f { margin-left: 9px; }
.gear-ico { width: 18px; height: 18px; margin-left: -1px; margin-right: -1px; flex: none; }

.node { display: flex; align-items: center; height: 20px; margin-top: 4px; padding-left: 35px; }
.node-tri { width: 11px; height: 15px; flex: none; }
.node-box {
  height: 20px;
  margin-left: 8px;
  background: #f0f0f0;
  display: flex;
  align-items: center;
  padding: 0 11px 0 3px;
  white-space: nowrap;
}
.node-name {
  font-size: 11px;
  letter-spacing: .6px;
  color: #444;
  margin-left: 14px;
}
.node-name.wide { margin-left: 14px; }

.navbar {
  position: absolute;
  left: 431px;
  bottom: 4px;
  width: 237px;
  height: 23px;
  background: #f0f0f0;
  display: flex;
  align-items: center;
  gap: 6px;
  padding-left: 3px;
}
.nav-btn { display: flex; align-items: center; }
.nav-btn svg { width: 18px; height: 18px; flex: none; overflow: visible; }
.nav-btn .caret { margin-left: 4px; }
.nav-btn { min-width: 20px; }
.n1 { margin-left: -1px; }
.n0 { margin-left: -1px; }
.n1 .caret, .n0 .caret { margin-left: 1px; }

.status-icons {
  position: absolute;
  right: 13px;
  bottom: 9px;
  display: flex;
  gap: 10px;
}
.status-icons svg { width: 16px; height: 15px; display: block; }

/* timeline */
.timeline {
  height: 50px;
  background: #f0f0f0;
  border-top: 1px solid #cfcfcf;
  display: flex;
  align-items: center;
  padding: 0 12px 0 11px;
  flex: none;
}
.controls { display: flex; gap: 12px; }
.controls svg { width: 13px; height: 15px; display: block; }
.track { width: 56px; height: 40px; margin-left: 22px; flex: none; }
.settings { width: 18px; height: 18px; margin-left: auto; }
```
